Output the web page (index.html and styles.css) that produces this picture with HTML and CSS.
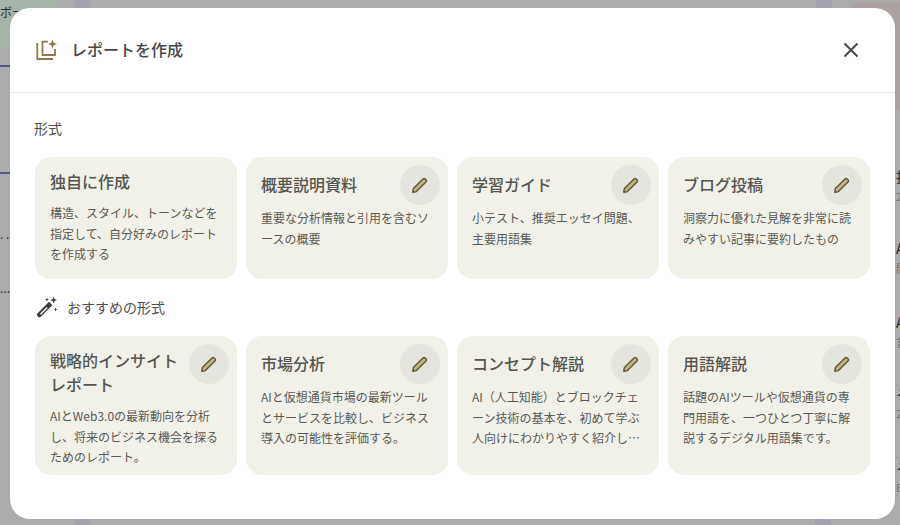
FILE: index.html
```html
<!DOCTYPE html>
<html lang="ja">

<head>
  <meta charset="UTF-8" />
  <meta name="viewport" content="width=device-width, initial-scale=1.0" />
  <title>レポートを作成</title>
  <link rel="stylesheet" href="styles.css">
</head>

<body>
  <div class="backdrop">
    <span class="bg-tile tile-green"></span>
    <span class="bg-tile tile-violet-top"></span>
    <span class="bg-tile tile-violet-top2"></span>
    <span class="bg-tile tile-pink"></span>
    <span class="bg-tile tile-violet-bottom"></span>
    <span class="bg-tile tile-violet-bottom2"></span>
    <span class="bg-text text-top">ボー</span>
    <span class="bg-line line-a"></span>
    <span class="bg-line line-b"></span>
    <span class="bg-text text-dots1">. .</span>
    <span class="bg-text text-dots2">...</span>
    <span class="bg-text side s1">投</span>
    <span class="bg-text side sub s1b">2</span>
    <span class="bg-text side s2">A</span>
    <span class="bg-text side sub s2b">問</span>
    <span class="bg-text side s3">A</span>
    <span class="bg-text side sub s3b">言</span>
    <span class="bg-text side s4">そ</span>
    <span class="bg-text side sub s4b">2</span>
    <span class="bg-text side s5">そ</span>
    <span class="bg-text side sub s5b">E</span>
  </div>

  <div class="modal">
    <header class="modal-head">
      <div class="modal-title">
        <svg class="title-icon" viewBox="0 0 24 24" width="24" height="24" fill="none" stroke="#8b7a4b" stroke-width="1.8">
          <path d="M13 3.7H7.5V17H20v-6" />
          <path d="M2.3 5v16H18" />
          <path d="M17.5 1.5l1.2 3.3 3.3 1.2-3.3 1.2-1.2 3.3-1.2-3.3L13 6l3.3-1.2z" fill="#8b7a4b" stroke="none" />
        </svg>
        <h1>レポートを作成</h1>
      </div>
      <button class="close" aria-label="閉じる">
        <svg viewBox="0 0 16 16" width="16" height="16" fill="none" stroke="#4a4a4a" stroke-width="2">
          <path d="M1.5 1.5l13 13M14.5 1.5l-13 13" />
        </svg>
      </button>
    </header>

    <div class="modal-body">
      <h2 class="section-label">形式</h2>
      <div class="card-row first">
        <div class="card">
          <h3 class="lifted">独自に作成</h3>
          <p>構造、スタイル、トーンなどを指定して、自分好みのレポートを作成する</p>
        </div>
        <div class="card">
          <button class="edit"><svg viewBox="0 0 18 18" width="18" height="18"><use href="#pencil" /></svg></button>
          <h3>概要説明資料</h3>
          <p>重要な分析情報と引用を含むソースの概要</p>
        </div>
        <div class="card">
          <button class="edit"><svg viewBox="0 0 18 18" width="18" height="18"><use href="#pencil" /></svg></button>
          <h3>学習ガイド</h3>
          <p>小テスト、推奨エッセイ問題、主要用語集</p>
        </div>
        <div class="card">
          <button class="edit"><svg viewBox="0 0 18 18" width="18" height="18"><use href="#pencil" /></svg></button>
          <h3>ブログ投稿</h3>
          <p>洞察力に優れた見解を非常に読みやすい記事に要約したもの</p>
        </div>
      </div>

      <div class="suggest-label">
        <svg viewBox="0 0 24 24" width="24" height="24" fill="#3f3f3f">
          <path d="M2.4 18.4L14 6.8l3.4 3.4L5.8 21.8a1.8 1.8 0 0 1-2.6 0l-.8-.8a1.8 1.8 0 0 1 0-2.6z" />
          <path d="M5 18.8l6.8-6.8 .9.9-6.8 6.8z" fill="#fff" />
          <path d="M18.6 1.5l1 2.5 2.4 1-2.4 1-1 2.4-1-2.4-2.4-1 2.4-1zM12 2.5l.6 1.4 1.4.6-1.4.6-.6 1.4-.6-1.4-1.4-.6 1.4-.6zM20.5 12.5l.6 1.4 1.4.6-1.4.6-.6 1.4-.6-1.4-1.4-.6 1.4-.6z" />
        </svg>
        <span>おすすめの形式</span>
      </div>
      <div class="card-row second">
        <div class="card">
          <button class="edit"><svg viewBox="0 0 18 18" width="18" height="18"><use href="#pencil" /></svg></button>
          <h3 class="lifted wide">戦略的インサイトレポート</h3>
          <p>AIとWeb3.0の最新動向を分析し、将来のビジネス機会を探るためのレポート。</p>
        </div>
        <div class="card">
          <button class="edit"><svg viewBox="0 0 18 18" width="18" height="18"><use href="#pencil" /></svg></button>
          <h3>市場分析</h3>
          <p>AIと仮想通貨市場の最新ツールとサービスを比較し、ビジネス導入の可能性を評価する。</p>
        </div>
        <div class="card">
          <button class="edit"><svg viewBox="0 0 18 18" width="18" height="18"><use href="#pencil" /></svg></button>
          <h3>コンセプト解説</h3>
          <p class="clamp">AI（人工知能）とブロックチェーン技術の基本を、初めて学ぶ人向けにわかりやすく紹介します。</p>
        </div>
        <div class="card">
          <button class="edit"><svg viewBox="0 0 18 18" width="18" height="18"><use href="#pencil" /></svg></button>
          <h3>用語解説</h3>
          <p>話題のAIツールや仮想通貨の専門用語を、一つひとつ丁寧に解説するデジタル用語集です。</p>
        </div>
      </div>
    </div>
  </div>

  <svg class="defs" width="0" height="0">
    <symbol id="pencil" viewBox="0 0 18 18">
      <path d="M1.8 16.2l.6-3.6 9.6-9.6a1.5 1.5 0 0 1 2.2 0l.8.8a1.5 1.5 0 0 1 0 2.2l-9.6 9.6z" fill="#c2b587" stroke="#5f5230" stroke-width="1.4" stroke-linejoin="round" />
    </symbol>
  </svg>
</body>

</html>
```

FILE: styles.css
```css
* {
  box-sizing: border-box;
}

html,
body {
  margin: 0;
  height: 100%;
}

body {
  width: 900px;
  height: 525px;
  overflow: hidden;
  position: relative;
  background: #ababab;
  font-family: "Noto Sans CJK JP", "Roboto", sans-serif;
  color: #444;
}

/* page behind the dialog */
.backdrop {
  position: absolute;
  inset: 0;
}

.bg-tile {
  position: absolute;
}

.tile-green {
  left: 0;
  top: 0;
  width: 57px;
  height: 48px;
  background: #a5b3a8;
}

.tile-violet-top {
  left: 74px;
  top: 0;
  width: 16px;
  height: 8px;
  background: #a3a2b0;
}

.tile-violet-top2 {
  left: 816px;
  top: 0;
  width: 16px;
  height: 8px;
  background: #a3a2b0;
}

.tile-pink {
  left: 848px;
  top: 2px;
  width: 52px;
  height: 108px;
  border-radius: 12px 0 0 0;
  background: #aba1a0;
}

.tile-violet-bottom {
  left: 74px;
  top: 519px;
  width: 16px;
  height: 6px;
  background: #a3a2b0;
}

.tile-violet-bottom2 {
  left: 815px;
  top: 519px;
  width: 16px;
  height: 6px;
  background: #a3a2b0;
}

.bg-text {
  position: absolute;
  font-size: 12px;
  line-height: 16px;
  color: #333;
}

.text-top {
  left: 0;
  top: 4px;
  color: #2b302b;
}

.text-dots1 {
  left: 0;
  top: 226px;
}

.text-dots2 {
  left: 0;
  top: 280px;
}

.bg-line {
  position: absolute;
  left: 0;
  width: 10px;
  height: 2px;
  background: #51568f;
}

.line-a {
  top: 65px;
}

.line-b {
  top: 172px;
}

.side {
  left: 896px;
  font-size: 14px;
  color: #222;
}

.sub {
  font-size: 11px;
  color: #707070;
}

.s1 {
  top: 168px;
}

.s1b {
  top: 188px;
}

.s2 {
  top: 240px;
}

.s2b {
  top: 260px;
}

.s3 {
  top: 314px;
}

.s3b {
  top: 334px;
}

.s4 {
  top: 386px;
}

.s4b {
  top: 405px;
}

.s5 {
  top: 460px;
}

.s5b {
  top: 479px;
}

/* dialog */
.modal {
  position: absolute;
  left: 10px;
  top: 8px;
  width: 885px;
  height: 511px;
  background: #fff;
  border-radius: 20px;
  overflow: hidden;
}

.modal-head {
  height: 85px;
  padding: 0 36px 0 25px;
  display: flex;
  align-items: center;
  justify-content: space-between;
  border-bottom: 1px solid #e6e6e6;
}

.modal-title {
  display: flex;
  align-items: center;
  gap: 12px;
}

.modal-title h1 {
  margin: 0 0 3px;
  font-size: 16px;
  font-weight: 500;
  line-height: 24px;
  color: #484848;
}

.close {
  appearance: none;
  border: none;
  background: none;
  padding: 0;
  width: 16px;
  height: 16px;
  display: flex;
}

.modal-body {
  padding: 26px 25px 0;
}

.section-label {
  margin: 0 0 0 -1px;
  font-size: 14px;
  font-weight: 400;
  line-height: 18px;
  color: #505050;
}

.card-row {
  display: grid;
  grid-template-columns: repeat(4, 202px);
  gap: 9px;
}

.first {
  margin-top: 20px;
  grid-auto-rows: 122px;
}

.second {
  margin-top: 17px;
  grid-auto-rows: 139px;
}

.card {
  position: relative;
  background: #f1f1ea;
  border-radius: 16px;
  padding: 16px 16px 0 15px;
}

.card h3 {
  margin: -1px 0 12px;
  font-size: 16px;
  font-weight: 500;
  line-height: 24px;
  color: #55554f;
}

.card h3.lifted {
  margin-top: -4px;
  margin-bottom: 10px;
}

.card h3.wide {
  padding-right: 30px;
}

.card p {
  margin: 0;
  font-size: 12px;
  line-height: 20.5px;
  color: #5a5a55;
}

.clamp {
  display: -webkit-box;
  -webkit-line-clamp: 3;
  -webkit-box-orient: vertical;
  overflow: hidden;
}

.edit {
  position: absolute;
  top: 8px;
  right: 8px;
  width: 40px;
  height: 40px;
  border: none;
  padding: 0;
  border-radius: 50%;
  background: #e4e5de;
  display: flex;
  align-items: center;
  justify-content: center;
}

.suggest-label {
  margin-top: 16px;
  height: 24px;
  display: flex;
  align-items: center;
  gap: 8px;
  font-size: 14px;
  color: #505050;
}

.defs {
  position: absolute;
}
```
